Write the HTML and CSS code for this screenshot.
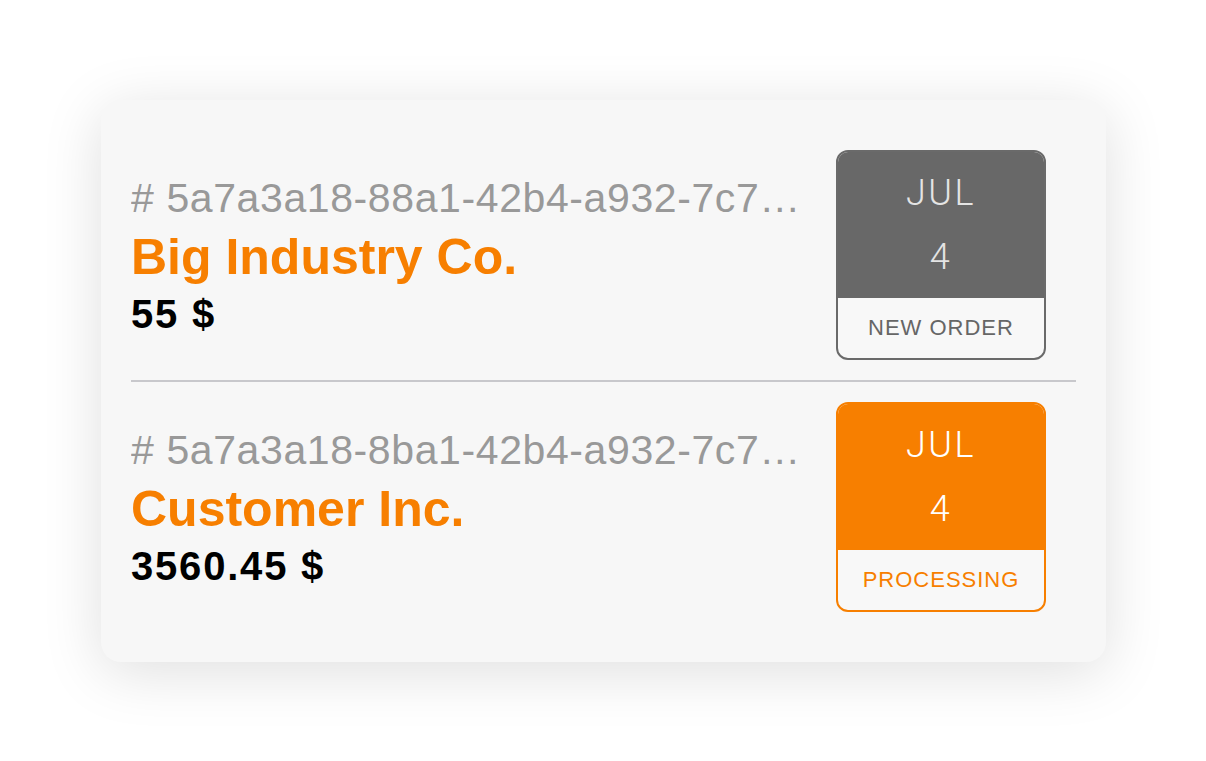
FILE: index.html
```html
<!DOCTYPE html>
<html lang="en">
<head>
<meta charset="utf-8">
<title>Orders</title>
<link rel="stylesheet" href="styles.css">
</head>
<body>
  <main class="page">
    <section class="card">
      <article class="order">
        <div class="order-info">
          <div class="order-id"># 5a7a3a18-88a1-42b4-a932-7c7…</div>
          <div class="order-customer">Big Industry Co.</div>
          <div class="order-amount">55 $</div>
        </div>
        <div class="badge badge-new">
          <div class="badge-date">
            <span class="badge-month">JUL</span>
            <span class="badge-day">4</span>
          </div>
          <div class="badge-status">NEW ORDER</div>
        </div>
      </article>
      <hr class="divider">
      <article class="order">
        <div class="order-info">
          <div class="order-id"># 5a7a3a18-8ba1-42b4-a932-7c7…</div>
          <div class="order-customer">Customer Inc.</div>
          <div class="order-amount">3560.45 $</div>
        </div>
        <div class="badge badge-processing">
          <div class="badge-date">
            <span class="badge-month">JUL</span>
            <span class="badge-day">4</span>
          </div>
          <div class="badge-status">PROCESSING</div>
        </div>
      </article>
    </section>
  </main>
</body>
</html>
```
FILE: styles.css
```css
html, body {
  margin: 0;
  padding: 0;
  background: #ffffff;
}

body {
  font-family: "Liberation Sans", Arial, sans-serif;
}

.page {
  padding: 100px 100px 100px 101px;
}

.card {
  background: #f7f7f7;
  border-radius: 20px;
  padding: 30px;
  box-shadow: 0 10px 60px rgba(0, 0, 0, 0.13);
}

.order {
  display: flex;
  align-items: center;
  padding: 20px 0;
}

.order-info {
  flex: 1;
  min-width: 0;
}

.order-id {
  font-size: 41px;
  line-height: 57px;
  color: #999999;
  letter-spacing: 0.6px;
  white-space: nowrap;
  overflow: hidden;
}

.order-customer {
  font-size: 50px;
  line-height: 61px;
  font-weight: 700;
  color: #f77f00;
  white-space: nowrap;
}

.order-amount {
  font-size: 40px;
  line-height: 53px;
  font-weight: 700;
  color: #000000;
  letter-spacing: 1.8px;
}

.divider {
  margin: 0;
  border: 0;
  height: 2px;
  background: #c8c8cc;
}

.badge {
  width: 210px;
  box-sizing: border-box;
  border: 2px solid;
  border-radius: 12px;
  overflow: hidden;
  margin-right: 30px;
  flex: none;
  background: #f8f8f8;
}

.badge-date {
  height: 146px;
  display: flex;
  flex-direction: column;
  align-items: center;
  justify-content: center;
  font-family: "Roboto", "Liberation Sans", sans-serif;
  font-weight: 300;
  font-size: 36px;
  line-height: 64px;
  letter-spacing: 2.5px;
}

.badge-status {
  height: 60px;
  display: flex;
  align-items: center;
  justify-content: center;
  font-size: 22px;
  letter-spacing: 1px;
}

.badge-new {
  border-color: #6a6a6a;
}

.badge-new .badge-date {
  background: #686868;
  color: #e4e4e4;
}

.badge-new .badge-status {
  color: #666666;
}

.badge-processing {
  border-color: #f77f00;
}

.badge-processing .badge-date {
  background: #f77f00;
  color: #ffffff;
}

.badge-processing .badge-status {
  color: #f77f00;
}
```
